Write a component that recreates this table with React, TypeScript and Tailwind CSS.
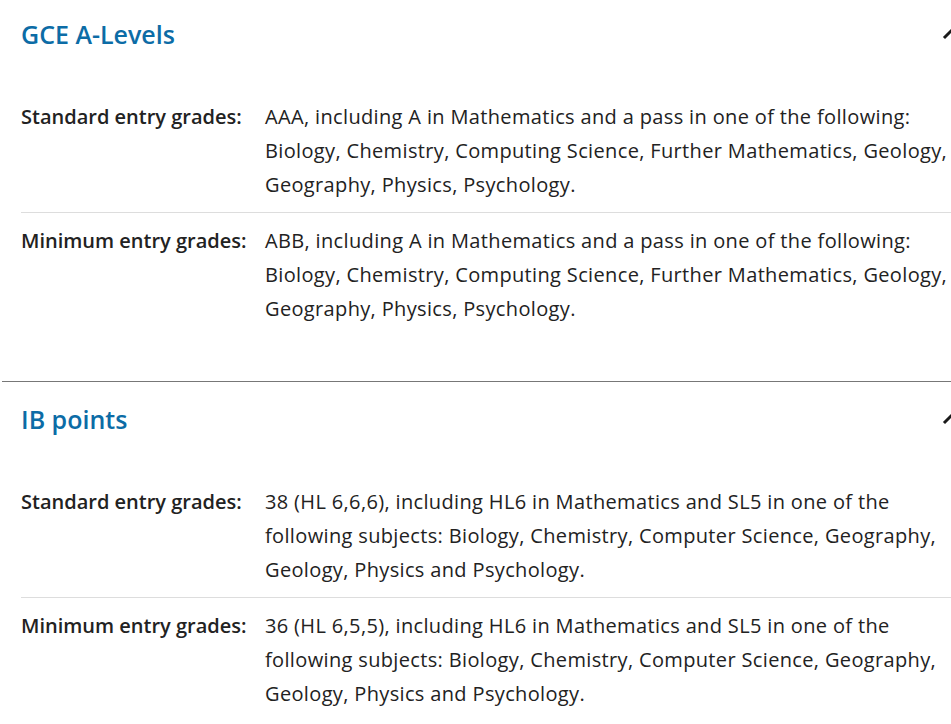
import React from 'react';

interface EntryRow {
  label: string;
  value: string;
}

interface Qualification {
  id: string;
  title: string;
  rows: EntryRow[];
}

const qualifications: Qualification[] = [
  {
    id: 'a-levels',
    title: 'GCE A-Levels',
    rows: [
      {
        label: 'Standard entry grades:',
        value:
          'AAA, including A in Mathematics and a pass in one of the following: Biology, Chemistry, Computing Science, Further Mathematics, Geology, Geography, Physics, Psychology.',
      },
      {
        label: 'Minimum entry grades:',
        value:
          'ABB, including A in Mathematics and a pass in one of the following: Biology, Chemistry, Computing Science, Further Mathematics, Geology, Geography, Physics, Psychology.',
      },
    ],
  },
  {
    id: 'ib-points',
    title: 'IB points',
    rows: [
      {
        label: 'Standard entry grades:',
        value:
          '38 (HL 6,6,6), including HL6 in Mathematics and SL5 in one of the following subjects: Biology, Chemistry, Computer Science, Geography, Geology, Physics and Psychology.',
      },
      {
        label: 'Minimum entry grades:',
        value:
          '36 (HL 6,5,5), including HL6 in Mathematics and SL5 in one of the following subjects: Biology, Chemistry, Computer Science, Geography, Geology, Physics and Psychology.',
      },
    ],
  },
];

const Chevron: React.FC = () => (
  <svg
    width="24"
    height="24"
    viewBox="0 0 24 24"
    fill="none"
    stroke="currentColor"
    strokeWidth={3}
    strokeLinecap="square"
    className="text-[#1a1a1a]"
  >
    <path d="M6 15l6-6 6 6" />
  </svg>
);

export default function App() {
  return (
    <div className="w-[951px] h-[724px] overflow-hidden bg-white text-[#222] font-['Open_Sans',sans-serif]">
      <div className="-mt-[4px] pl-[2px] w-[1000px]">
        {qualifications.map((q) => (
          <section key={q.id} className="border-t border-[#777]">
            {/* Accordion header */}
            <div className="flex items-center pl-[19px] pt-[21px]">
              <h2 className="w-[918px] text-[25px] leading-[32px] font-semibold text-[#0c6ca6]">
                {q.title}
              </h2>
              <Chevron />
            </div>

            {/* Entry requirements */}
            <div className="ml-[19px] mt-[39px] pb-[45px]">
              {q.rows.map((row, idx) => (
                <div
                  key={row.label}
                  className={`flex pt-[11px] pb-[10px] text-[20px] leading-[34px] ${
                    idx > 0 ? 'border-t border-[#ddd]' : ''
                  }`}
                >
                  <div className="w-[244px] shrink-0 font-semibold">{row.label}</div>
                  <div className="w-[700px] tracking-[0.35px]">{row.value}</div>
                </div>
              ))}
            </div>
          </section>
        ))}
      </div>
    </div>
  );
}
